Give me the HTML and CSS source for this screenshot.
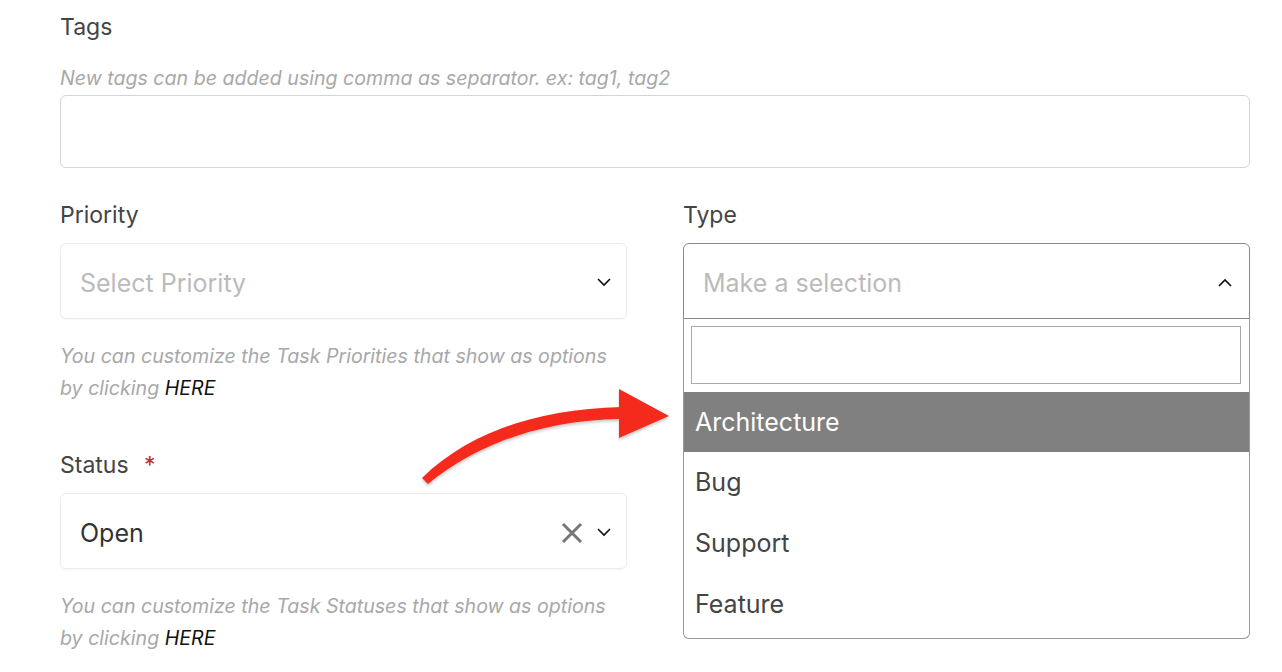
FILE: index.html
```html
<!DOCTYPE html>
<html>
<head>
    <meta charset="utf-8">
    <link rel="stylesheet" href="styles.css">
</head>
<body>
    <div class="task-form">
        <div class="field">
            <label class="field-label">Tags</label>
            <p class="field-hint">New tags can be added using comma as separator. ex: tag1, tag2</p>
            <div class="text-input tags-input"></div>
        </div>

        <div class="row">
            <div class="col">
                <div class="field">
                    <label class="field-label">Priority</label>
                    <div class="select">
                        <span class="select-value placeholder">Select Priority</span>
                        <svg class="chevron" viewBox="0 0 14 9" width="14" height="9"><path d="M1 1l6 6 6-6" fill="none" stroke="#111" stroke-width="1.6"/></svg>
                    </div>
                    <p class="field-help">You can customize the Task Priorities that show as options<br>by clicking <a href="#">HERE</a></p>
                </div>

                <div class="field status-field">
                    <label class="field-label">Status <span class="required">*</span></label>
                    <div class="select">
                        <span class="select-value">Open</span>
                        <svg class="clear" viewBox="0 0 22 22" width="22" height="22"><path d="M2 2l18 18M20 2L2 20" stroke="#777" stroke-width="3"/></svg>
                        <svg class="chevron" viewBox="0 0 14 9" width="14" height="9"><path d="M1 1l6 6 6-6" fill="none" stroke="#111" stroke-width="1.6"/></svg>
                    </div>
                    <p class="field-help">You can customize the Task Statuses that show as options<br>by clicking <a href="#">HERE</a></p>
                </div>
            </div>

            <div class="col">
                <div class="field">
                    <label class="field-label">Type</label>
                    <div class="select open">
                        <span class="select-value placeholder">Make a selection</span>
                        <svg class="chevron" viewBox="0 0 14 9" width="14" height="9"><path d="M1 8l6-6 6 6" fill="none" stroke="#111" stroke-width="1.6"/></svg>
                    </div>
                    <div class="dropdown">
                        <div class="dropdown-search"></div>
                        <ul class="options">
                            <li class="active">Architecture</li>
                            <li>Bug</li>
                            <li>Support</li>
                            <li>Feature</li>
                        </ul>
                    </div>
                </div>
            </div>
        </div>

        <!-- callout pointing at the first option -->
        <svg class="callout" viewBox="0 0 260 110" width="260" height="110">
            <defs>
                <filter id="soft" x="-10%" y="-10%" width="120%" height="130%">
                    <feDropShadow dx="0" dy="2" stdDeviation="1.5" flood-color="#000" flood-opacity="0.22"/>
                </filter>
            </defs>
            <g filter="url(#soft)" fill="#f42c1f">
                <path d="M2 95 C50 48 120 26 201 24 L201 36 C125 37 58 60 8 101 Z"/>
                <polygon points="199,6 249,33 199,55"/>
            </g>
        </svg>
    </div>
</body>
</html>
```

FILE: styles.css
```css
html,
body {
    margin: 0;
    background: #fff;
}

body {
    font-family: Inter, "Noto Sans", sans-serif;
    color: #444;
}

.task-form {
    position: relative;
    width: 1190px;
    padding: 12px 0 0 60px;
}

.field-label {
    display: block;
    font-size: 23px;
    line-height: 31px;
    color: #444;
}

.required {
    color: #b0302c;
    margin-left: 9px;
}

.field-hint {
    margin: 19px 0 1px;
    font-size: 19.6px;
    line-height: 32px;
    font-style: italic;
    color: #a8a8a8;
}

.text-input {
    box-sizing: border-box;
    border: 1px solid #d4d4d4;
    border-radius: 6px;
}

.tags-input {
    height: 73px;
}

.row {
    display: grid;
    grid-template-columns: 567px 567px;
    column-gap: 56px;
    margin-top: 32px;
}

.select {
    box-sizing: border-box;
    display: flex;
    align-items: center;
    height: 76px;
    margin-top: 12px;
    padding: 3px 15px 0 19px;
    border: 1px solid #ececec;
    border-radius: 6px;
    box-shadow: 0 1px 2px rgba(0, 0, 0, 0.04);
}

.select-value {
    flex: 1;
    font-size: 25px;
    color: #333;
}

.select-value.placeholder {
    color: #bbb;
}

.clear {
    margin-right: 14px;
    margin-left: 4px;
}

.select.open {
    border-color: #8a8a8a;
    border-radius: 6px 6px 0 0;
    box-shadow: none;
    padding-right: 17px;
}

.field-help {
    margin: 21px 0 0;
    font-size: 19.6px;
    line-height: 32px;
    font-style: italic;
    color: #a8a8a8;
}

.field-help a {
    color: #111;
    text-decoration: none;
}

.status-field {
    margin-top: 46px;
}

.dropdown {
    box-sizing: border-box;
    height: 320px;
    border: 1px solid #999;
    border-top: none;
    border-radius: 0 0 6px 6px;
    padding-top: 7px;
}

.dropdown-search {
    height: 58px;
    margin: 0 8px 0 7px;
    box-sizing: border-box;
    border: 1px solid #aaa;
}

.options {
    list-style: none;
    margin: 8px 0 0;
    padding: 0;
}

.options li {
    height: 61px;
    line-height: 61px;
    padding-left: 11px;
    font-size: 25px;
    color: #444;
}

.options li.active {
    height: 60px;
    line-height: 60px;
    background: #808080;
    color: #fff;
}

.callout {
    position: absolute;
    left: 420px;
    top: 383px;
}
```
